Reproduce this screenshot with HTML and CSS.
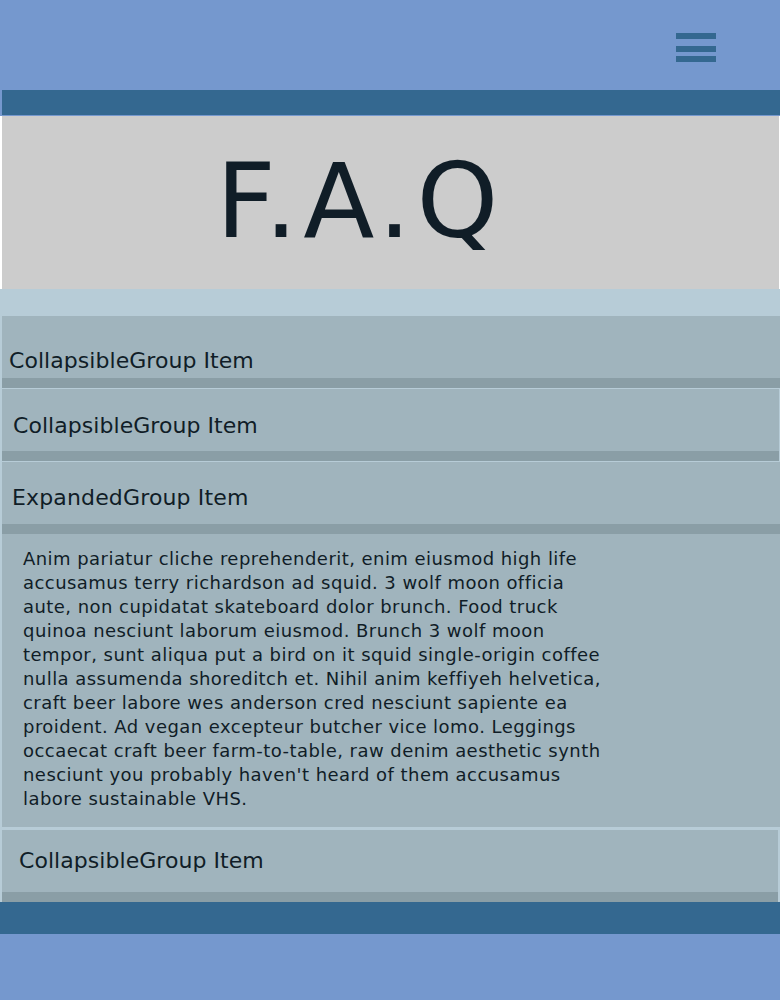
FILE: index.html
```html
<!DOCTYPE html>
<html lang="en">
<head>
<meta charset="utf-8">
<title>F.A.Q</title>
<link rel="stylesheet" href="styles.css">
</head>
<body>
<header class="top">
  <div class="top-inner">
    <button class="burger" aria-label="Menu"><span class="bar b1"></span><span class="bar b2"></span><span class="bar b3"></span></button>
  </div>
  <div class="navbar"></div>
</header>
<section class="hero">
  <h1 class="hero-title">F.A.Q</h1>
</section>
<main class="faq">
  <div class="item item-1">
    <div class="item-head">CollapsibleGroup Item</div>
    <div class="item-strip"></div>
  </div>
  <div class="item item-2">
    <div class="item-head">CollapsibleGroup Item</div>
    <div class="item-strip"></div>
  </div>
  <div class="item item-3">
    <div class="item-head">ExpandedGroup Item</div>
    <div class="item-strip"></div>
    <div class="item-body"><p>Anim pariatur cliche reprehenderit, enim eiusmod high life accusamus terry richardson ad squid. 3 wolf moon officia aute, non cupidatat skateboard dolor brunch. Food truck quinoa nesciunt laborum eiusmod. Brunch 3 wolf moon tempor, sunt aliqua put a bird on it squid single-origin coffee nulla assumenda shoreditch et. Nihil anim keffiyeh helvetica, craft beer labore wes anderson cred nesciunt sapiente ea proident. Ad vegan excepteur butcher vice lomo. Leggings occaecat craft beer farm-to-table, raw denim aesthetic synth nesciunt you probably haven't heard of them accusamus labore sustainable VHS.</p></div>
  </div>
  <div class="item item-4">
    <div class="item-head">CollapsibleGroup Item</div>
    <div class="item-strip"></div>
  </div>
</main>
<footer class="bottom">
  <div class="bottom-bar"></div>
  <div class="bottom-fill"></div>
</footer>
</body>
</html>
```
FILE: styles.css
```css
* { box-sizing: border-box; }
html, body { margin: 0; padding: 0; }
body {
  background: #ffffff;
  font-family: "DejaVu Sans", Verdana, sans-serif;
  color: #101d27;
  width: 780px;
}

.top { background: #7598ce; padding-bottom: 1px; }
.top-inner {
  height: 90px;
  display: flex;
  justify-content: flex-end;
  align-items: flex-start;
  padding-right: 64px;
}
.burger {
  margin: 33px 0 0;
  padding: 0;
  border: 0;
  background: transparent;
  width: 40px;
  display: flex;
  flex-direction: column;
}
.bar { display: block; width: 40px; height: 6px; background: #346890; }
.b2 { margin-top: 7px; }
.b3 { margin-top: 4px; }
.navbar { height: 25px; margin-left: 2px; background: #346890; }

.hero {
  background: #cccccc;
  margin: 0 1px 0 2px;
  height: 173px;
  padding: 25px 0 0 214px;
}
.hero-title {
  margin: 0;
  font-weight: normal;
  font-size: 104px;
  line-height: 120px;
  letter-spacing: 5.5px;
  color: #101d27;
}

.faq {
  background: #b7ccd7;
  padding-top: 27px;
}
.item { margin-left: 2px; background: #a0b4bd; }
.item-head {
  font-size: 22px;
  line-height: 26px;
  height: 62px;
  letter-spacing: 0.05px;
}
.item-strip { height: 10px; background: #8a9ea6; }
.item-1 .item-head { padding: 32px 0 4px 7px; }
.item-2 { margin-top: 1px; margin-right: 1px; }
.item-2 .item-head { padding: 24px 0 12px 11px; }
.item-3 { margin-top: 1px; }
.item-3 .item-head { padding: 23px 0 13px 10px; letter-spacing: 0.15px; }
.item-body { padding: 13px 0 16px 21px; }
.item-body p {
  margin: 0;
  width: 595px;
  font-size: 18px;
  line-height: 24px;
  letter-spacing: 0.45px;
}
.item-4 { margin-top: 3px; margin-right: 2px; }
.item-4 .item-head { padding: 18px 0 18px 17px; }

.bottom-bar { height: 32px; background: #346890; }
.bottom-fill { height: 66px; background: #7598ce; }
```
